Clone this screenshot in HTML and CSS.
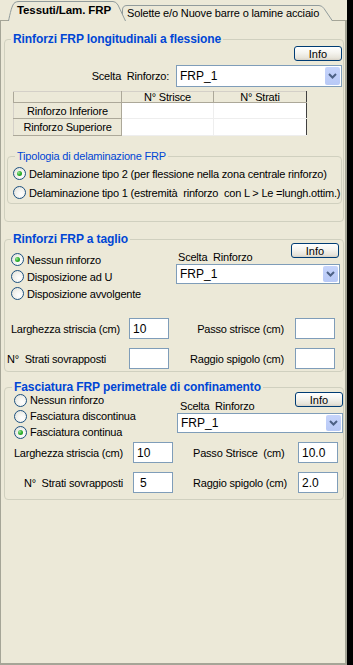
FILE: index.html
```html
<!DOCTYPE html>
<html lang="it">
<head>
  <meta charset="UTF-8" />
  <meta name="viewport" content="width=device-width, initial-scale=1.0"/>
  <title>Tessuti/Lam. FRP</title>
  <link rel="stylesheet" href="styles.css">
</head>
<body>
  <div class="window">
    <div class="tabs">
      <div class="tab tab-active">
        <svg class="tab-shape" width="118" height="21" viewBox="0 0 118 21"><path d="M0.5,21 C2,14 4,4 7,2.5 Q8.5,1.5 11,1.5 L105,1.5 Q108,1.5 110,5 L117.5,21" fill="#ECE9D8" stroke="#919B9C"/></svg>
        <span class="tab-label">Tessuti/Lam. FRP</span>
      </div>
      <div class="tab tab-back">
        <svg class="tab-shape" width="211" height="17" viewBox="0 0 211 17"><path d="M0.5,17 L0.5,6 Q0.5,1.5 5,1.5 L197,1.5 Q200,1.5 202,4.5 L210.5,17" fill="#ECE9D8" stroke="#919B9C"/></svg>
        <span class="tab-label">Solette e/o Nuove barre o lamine acciaio</span>
      </div>
    </div>

    <div class="panel">
      <!-- flessione -->
      <fieldset class="group group-flex">
        <legend>Rinforzi FRP longitudinali a flessione</legend>
        <div class="info-row"><button class="btn-info">Info</button></div>
        <div class="choice-row">
          <span class="choice-label">Scelta&nbsp; Rinforzo:</span>
          <div class="combo combo-wide">
            <span class="combo-text">FRP_1</span>
            <span class="combo-btn"><svg width="9" height="6" viewBox="0 0 9 6"><path d="M1,1 L4.5,4.5 L8,1" fill="none" stroke="#4D6185" stroke-width="2"/></svg></span>
          </div>
        </div>
        <table class="grid">
          <tr class="grid-head">
            <th></th>
            <th>N° Strisce</th>
            <th class="last">N° Strati</th>
          </tr>
          <tr>
            <th class="row-head">Rinforzo Inferiore</th>
            <td></td>
            <td class="last"></td>
          </tr>
          <tr class="row-2">
            <th class="row-head">Rinforzo Superiore</th>
            <td></td>
            <td class="last"></td>
          </tr>
        </table>
        <fieldset class="subgroup">
          <legend>Tipologia di delaminazione FRP</legend>
          <label class="opt"><span class="radio on"></span>Delaminazione tipo 2 (per flessione nella zona centrale rinforzo)</label>
          <label class="opt"><span class="radio"></span>Delaminazione tipo 1 (estremità&nbsp; rinforzo&nbsp; con L &gt; Le =lungh.ottim.)</label>
        </fieldset>
      </fieldset>

      <!-- taglio -->
      <fieldset class="group group-shear">
        <legend>Rinforzi FRP a taglio</legend>
        <div class="split">
          <div class="opts">
            <label class="opt"><span class="radio on"></span>Nessun rinforzo</label>
            <label class="opt"><span class="radio"></span>Disposizione ad U</label>
            <label class="opt"><span class="radio"></span>Disposizione avvolgente</label>
          </div>
          <div class="pick">
            <div class="pick-top">
              <span class="pick-label">Scelta&nbsp; Rinforzo</span>
              <button class="btn-info">Info</button>
            </div>
            <div class="combo">
              <span class="combo-text">FRP_1</span>
              <span class="combo-btn"><svg width="9" height="6" viewBox="0 0 9 6"><path d="M1,1 L4.5,4.5 L8,1" fill="none" stroke="#4D6185" stroke-width="2"/></svg></span>
            </div>
          </div>
        </div>
        <div class="fields">
          <span class="f-label">Larghezza striscia (cm)</span>
          <input class="box" type="text" value="10">
          <span class="f-label">Passo strisce (cm)</span>
          <input class="box" type="text" value="">
          <span class="f-label f-left">N°&nbsp; Strati sovrapposti</span>
          <input class="box" type="text" value="">
          <span class="f-label">Raggio spigolo (cm)</span>
          <input class="box" type="text" value="">
        </div>
      </fieldset>

      <!-- confinamento -->
      <fieldset class="group group-wrap">
        <legend>Fasciatura FRP perimetrale di confinamento</legend>
        <div class="split">
          <div class="opts">
            <label class="opt"><span class="radio"></span>Nessun rinforzo</label>
            <label class="opt"><span class="radio"></span>Fasciatura discontinua</label>
            <label class="opt"><span class="radio on"></span>Fasciatura continua</label>
          </div>
          <div class="pick">
            <div class="pick-top">
              <span class="pick-label">Scelta&nbsp; Rinforzo</span>
              <button class="btn-info">Info</button>
            </div>
            <div class="combo">
              <span class="combo-text">FRP_1</span>
              <span class="combo-btn"><svg width="9" height="6" viewBox="0 0 9 6"><path d="M1,1 L4.5,4.5 L8,1" fill="none" stroke="#4D6185" stroke-width="2"/></svg></span>
            </div>
          </div>
        </div>
        <div class="fields">
          <span class="f-label">Larghezza striscia (cm)</span>
          <input class="box" type="text" value="10">
          <span class="f-label">Passo Strisce&nbsp; (cm)</span>
          <input class="box" type="text" value="10.0">
          <span class="f-label">N°&nbsp; Strati sovrapposti</span>
          <input class="box box-pad" type="text" value="5">
          <span class="f-label">Raggio spigolo (cm)</span>
          <input class="box" type="text" value="2.0">
        </div>
      </fieldset>
    </div>
  </div>
</body>
</html>
```

FILE: styles.css
```css
body {
  margin: 0;
  background: #000;
  font-family: "Liberation Sans", Arial, sans-serif;
  font-size: 11px;
  letter-spacing: -0.2px;
  color: #000;
}

.window {
  width: 347px;
  height: 665px;
  background: #ECE9D8;
  display: flex;
  flex-direction: column;
}

/* tabs */
.tabs {
  height: 21px;
  display: flex;
  align-items: flex-end;
  padding-left: 8px;
  margin-bottom: -1px;
}

.tab {
  position: relative;
  display: flex;
  align-items: center;
}

.tab-shape {
  position: absolute;
  left: 0;
  top: 0;
}

.tab-label {
  position: relative;
  white-space: nowrap;
}

.tab-active {
  width: 118px;
  height: 21px;
  z-index: 2;
  padding-left: 9px;
  box-sizing: border-box;
  font-weight: bold;
  font-size: 11.5px;
  letter-spacing: -0.1px;
  padding-bottom: 1px;
}

.tab-back {
  width: 211px;
  height: 17px;
  margin-left: -4px;
  padding-left: 5px;
  box-sizing: border-box;
  letter-spacing: -0.15px;
  padding-top: 1px;
}

.panel {
  flex: 1;
  border: 1px solid #A5A597;
  border-right-width: 2px;
  border-bottom-width: 2px;
  padding: 0 1px 0 3px;
}

/* group boxes */
fieldset {
  margin: 0;
  padding: 0;
  min-width: 0;
  border: 1px solid #D0D0BF;
  border-radius: 4px;
  box-sizing: border-box;
}

legend {
  padding: 0 2px;
  color: #0046D5;
}

.group {
  width: 340px;
}

.group > legend {
  font-size: 12px;
  font-weight: bold;
  line-height: 14px;
  letter-spacing: -0.1px;
  margin-left: 6px;
}

.group-flex {
  margin-top: 11px;
  height: 190px;
}

.group-shear {
  margin-top: 10px;
  height: 140px;
}

.group-wrap {
  margin-top: 8px;
  height: 120px;
}

.group-wrap > legend {
  margin-left: 7px;
}

.info-row {
  display: flex;
  justify-content: flex-end;
  padding-right: 1px;
}

.btn-info {
  width: 48px;
  height: 15px;
  padding: 0;
  border: 1px solid #003C74;
  border-radius: 3px;
  background: linear-gradient(180deg, #FFFFFF 0%, #F5F4EF 45%, #E6E3D9 85%, #D6D0C5 100%);
  font-family: inherit;
  font-size: 11px;
  line-height: 12px;
  color: #000;
}

.choice-row {
  display: flex;
  justify-content: flex-end;
  align-items: center;
  margin-top: 4px;
  padding-right: 1px;
}

.choice-label {
  margin-right: 7px;
}

.combo {
  height: 20px;
  border: 1px solid #7F9DB9;
  background: #fff;
  box-sizing: border-box;
  display: flex;
  align-items: center;
  justify-content: space-between;
  font-size: 12px;
  letter-spacing: 0;
}

.combo-wide {
  width: 166px;
  height: 22px;
}

.combo-text {
  padding-left: 3px;
}

.combo-btn {
  width: 15px;
  height: calc(100% - 2px);
  margin-right: 1px;
  border-radius: 2px;
  background: linear-gradient(180deg, #C6D4FB 0%, #B8C9F6 100%);
  display: flex;
  align-items: center;
  justify-content: center;
}

/* table */
.grid {
  margin: 4px 0 0 8px;
  width: 294px;
  border-collapse: collapse;
  table-layout: fixed;
  font-weight: normal;
}

.grid th,
.grid td {
  padding: 0;
  font-weight: normal;
  text-align: center;
  white-space: nowrap;
}

.grid th {
  background: #ECE9D8;
  border: 1px solid #ACA899;
}

.grid-head th {
  height: 10px;
  line-height: 10px;
  border-top-color: #D4D0C8;
}

.grid-head th:first-child {
  width: 107px;
}

.grid-head th:nth-child(2) {
  width: 91px;
}

.grid td {
  background: #fff;
  height: 15px;
  border: 1px solid #EEEEEE;
}

.grid .row-head {
  height: 15px;
  border-left-color: #D4D0C8;
}

.grid .row-2 th,
.grid .row-2 td {
  height: 16px;
}

.grid .last {
  border-right: 1px solid #404040;
}

.subgroup {
  margin: 13px 1px 0 2px;
  height: 55px;
}

.subgroup > legend {
  margin-left: 7px;
  line-height: 14px;
}

.subgroup .opt {
  height: 19px;
  padding-left: 5px;
}

.subgroup .opt:first-of-type {
  margin-top: 1px;
}

/* radios */
.opt {
  display: flex;
  align-items: center;
  white-space: nowrap;
}

.radio {
  width: 13px;
  height: 13px;
  box-sizing: border-box;
  border: 1px solid #1C5180;
  border-radius: 50%;
  background: radial-gradient(circle at 65% 65%, #FFFFFF 0%, #F3F3EF 45%, #DCDCD3 100%);
  margin-right: 3px;
  display: flex;
  align-items: center;
  justify-content: center;
  flex-shrink: 0;
}

.radio.on::after {
  content: "";
  width: 5px;
  height: 5px;
  border-radius: 50%;
  background: radial-gradient(circle at 35% 35%, #9BE29B 0%, #2BB02B 50%, #1A8A1A 100%);
}

/* shear / wrap body */
.split {
  display: flex;
}

.group-shear .split {
  margin-top: -3px;
}

.group-shear .opts {
  padding-top: 8px;
  margin-left: 6px;
}

.group-shear .opt {
  height: 17px;
}

.group-wrap .split {
  margin-top: -2px;
}

.group-wrap .opts {
  margin-left: 9px;
}

.group-wrap .opt {
  height: 16px;
}

.pick {
  margin-left: auto;
}

.group-shear .pick {
  width: 164px;
  margin-right: 3px;
}

.group-wrap .pick {
  width: 166px;
}

.pick-top {
  height: 21px;
  display: flex;
  justify-content: space-between;
}

.pick-label {
  align-self: flex-end;
  line-height: 14px;
}

.group-shear .pick-label {
  padding-left: 2px;
}

.group-shear .pick-top .btn-info {
  margin-right: 1px;
}

.group-wrap .pick-label {
  padding-left: 3px;
}

/* label + box rows */
.fields {
  display: grid;
  align-items: center;
  row-gap: 9px;
}

.group-shear .fields {
  margin-top: 16px;
  grid-template-columns: 124px 40px 126px 40px;
}

.group-wrap .fields {
  margin-top: 2px;
  grid-template-columns: 128px 40px 125px 40px;
}

.f-label {
  white-space: nowrap;
  text-align: right;
  padding-right: 9px;
}

.group-shear .f-label:nth-child(3),
.group-shear .f-label:nth-child(7) {
  padding-right: 11px;
}

.group-shear .f-left {
  text-align: left;
  padding-left: 2px;
}

.group-wrap .f-label {
  padding-right: 10px;
}

.group-wrap .f-label:nth-child(3),
.group-wrap .f-label:nth-child(7) {
  text-align: left;
  padding-left: 20px;
}

.box {
  width: 40px;
  height: 21px;
  box-sizing: border-box;
  margin: 0;
  padding: 0 0 0 3px;
  border: 1px solid #7F9DB9;
  background: #fff;
  font-family: inherit;
  font-size: 12px;
  color: #000;
  outline: none;
}

.box-pad {
  padding-left: 6px;
}
```
